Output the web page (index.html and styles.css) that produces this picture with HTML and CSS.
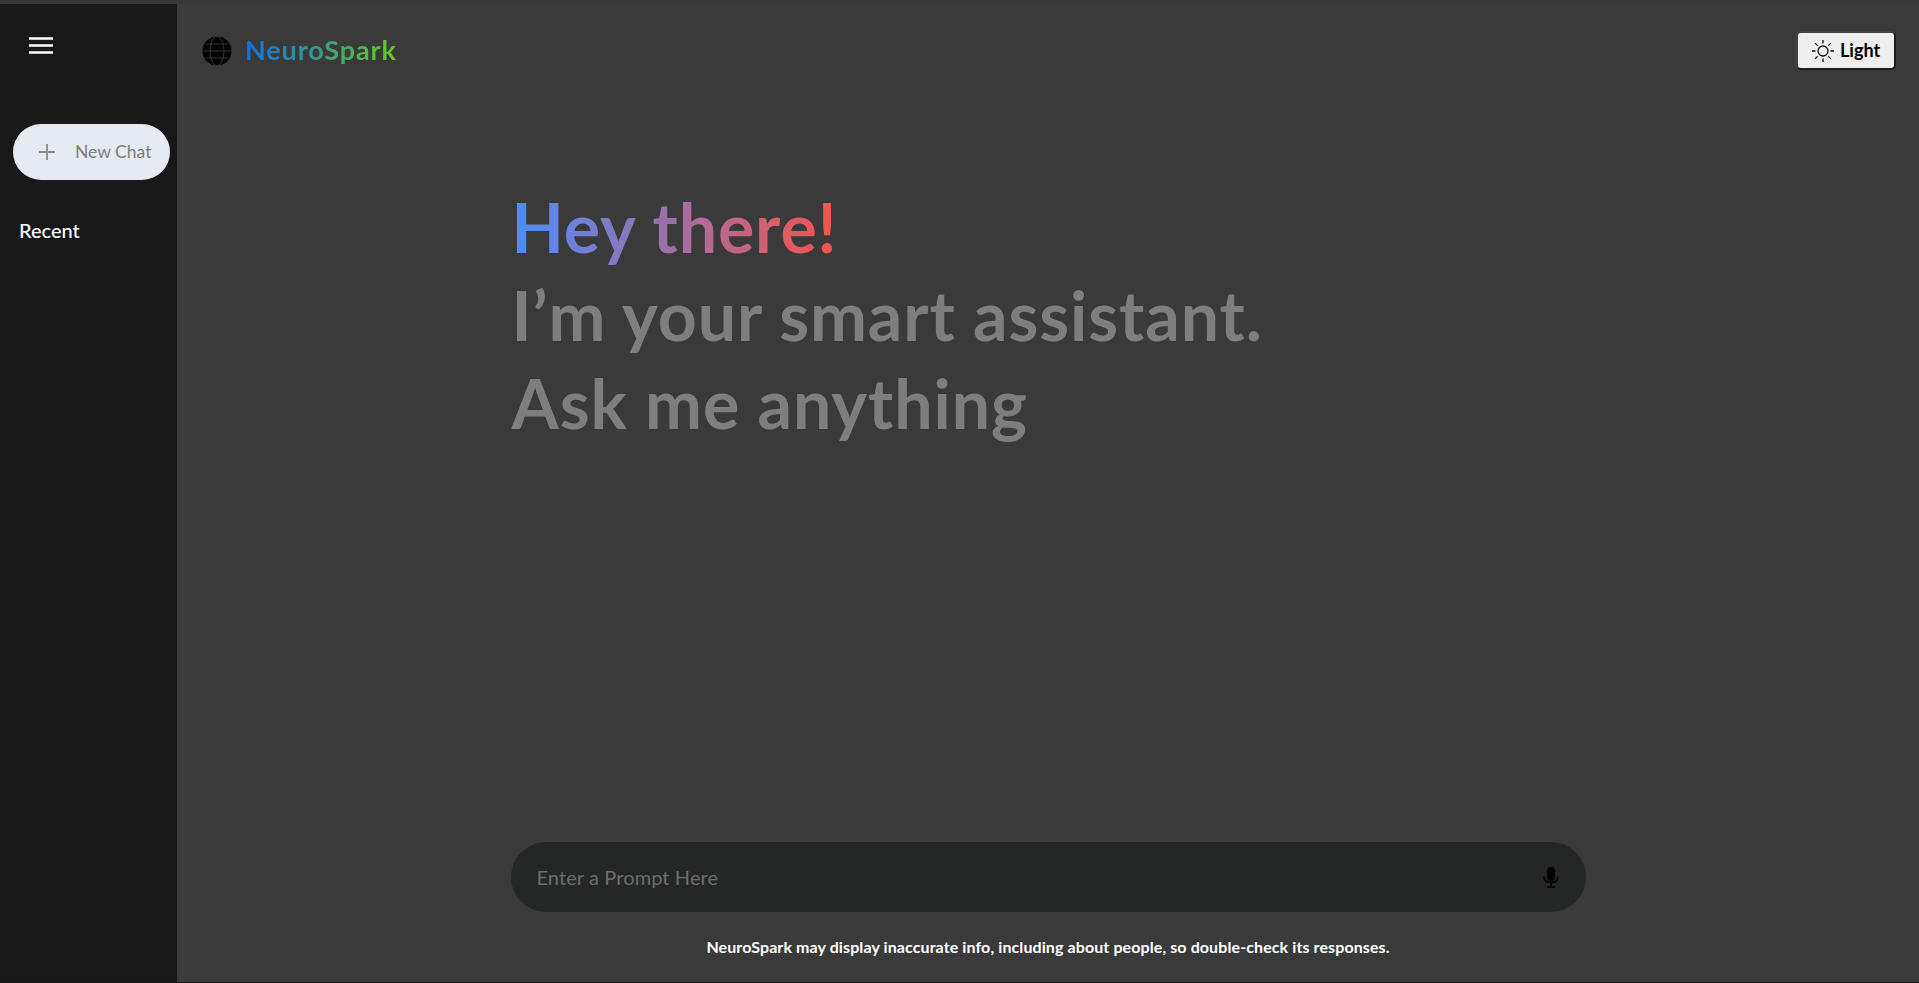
FILE: index.html
```html
<!DOCTYPE html>
<html lang="en">
<head>
    <meta charset="UTF-8">
    <meta name="viewport" content="width=device-width, initial-scale=1.0">
    <title>NeuroSpark</title>
    <link rel="stylesheet" href="styles.css">
</head>
<body>
    <div class="app">
        <!-- Sidebar -->
        <aside class="sidebar">
            <button class="menu-btn" aria-label="Menu">
                <svg width="24" height="17" viewBox="0 0 24 17"><path d="M0 1.5h24M0 8.5h24M0 15.5h24" stroke="#fff" stroke-width="2.4"/></svg>
            </button>
            <button class="new-chat">
                <svg width="16" height="16" viewBox="0 0 16 16"><path d="M8 0v16M0 8h16" stroke="#8a8a8a" stroke-width="1.8"/></svg>
                <span>New Chat</span>
            </button>
            <p class="recent">Recent</p>
        </aside>

        <main class="main">
            <header class="topbar">
                <div class="brand">
                    <svg class="globe" width="30" height="30" viewBox="0 0 30 30">
                        <circle cx="15" cy="15" r="14.5" fill="#000"/>
                        <path d="M.5 15h29M3.5 8h23M3.5 22h23" stroke="#333" stroke-width="1.2" fill="none"/>
                        <ellipse cx="15" cy="15" rx="7" ry="14.5" stroke="#333" stroke-width="1.2" fill="none"/>
                    </svg>
                    <span class="brand-name">NeuroSpark</span>
                </div>
                <button class="theme-btn">
                    <svg width="22" height="22" viewBox="0 0 22 22" fill="none" stroke="#111" stroke-width="1.3">
                        <circle cx="11" cy="11" r="5"/>
                        <path d="M11 0v3.5M11 18.5V22M0 11h3.5M18.5 11H22M3.2 3.2l2.4 2.4M16.4 16.4l2.4 2.4M3.2 18.8l2.4-2.4M16.4 5.6l2.4-2.4"/>
                    </svg>
                    <span class="theme-label">Light</span>
                </button>
            </header>

            <section class="greeting">
                <h1 class="hello"><span>Hey there!</span></h1>
                <p>I’m your smart assistant.</p>
                <p>Ask me anything</p>
            </section>

            <section class="bottom">
                <div class="prompt">
                    <input type="text" placeholder="Enter a Prompt Here">
                    <svg width="16" height="21" viewBox="0 0 16 21">
                        <rect x="4" y="0" width="8" height="14" rx="4" fill="#000"/>
                        <path d="M1 9.5c0 4 3 6 7 6s7-2 7-6M8 15.5V20M4 20h8" stroke="#000" stroke-width="1.6" fill="none"/>
                    </svg>
                </div>
                <p class="notice">NeuroSpark may display inaccurate info, including about people, so double-check its responses.</p>
            </section>
        </main>
    </div>
</body>
</html>
```

FILE: styles.css
```css
* {
    box-sizing: border-box;
}

html, body {
    height: 100%;
}

body {
    margin: 0;
    font-family: Lato, "Open Sans", sans-serif;
    background-color: #3a3a3a;
    border-top: 4px solid #35353b;
    border-bottom: 1px solid #1a1a1a;
    overflow: hidden;
}

button {
    font-family: inherit;
    border: none;
    cursor: pointer;
}

.app {
    display: flex;
    height: 100%;
}

/* Sidebar */
.sidebar {
    width: 177px;
    flex-shrink: 0;
    background-color: #181818;
    padding: 33px 0 0 13px;
}

.menu-btn {
    display: block;
    padding: 0;
    margin-left: 16px;
    background: none;
    line-height: 0;
}

.new-chat {
    display: flex;
    align-items: center;
    gap: 20px;
    width: 157px;
    height: 56px;
    margin-top: 70px;
    padding-left: 26px;
    border-radius: 28px;
    background-color: #e6eaf1;
    color: #7f7f7f;
    font-size: 17.5px;
    white-space: nowrap;
}

.new-chat span {
    padding-bottom: 1px;
}

.recent {
    margin: 37px 0 0 6px;
    font-size: 20px;
    line-height: 26px;
    font-weight: 500;
    color: #fff;
}

/* Main area */
.main {
    flex: 1;
    display: flex;
    flex-direction: column;
    min-width: 0;
}

.topbar {
    display: flex;
    justify-content: space-between;
    align-items: center;
    padding: 27px 23px 0 25px;
}

.brand {
    display: flex;
    align-items: center;
    gap: 13px;
}

.brand-name {
    padding-bottom: 2px;
    font-size: 27px;
    font-weight: 700;
    letter-spacing: 0.9px;
    background: linear-gradient(90deg, #0f6fe6, #65cb1e);
    -webkit-background-clip: text;
    background-clip: text;
    color: transparent;
}

.theme-btn {
    display: flex;
    align-items: center;
    gap: 6px;
    width: 100px;
    height: 39px;
    padding-left: 14px;
    border: 2px solid #1c1c1c;
    border-top-color: #444;
    border-left-color: #444;
    border-radius: 5px;
    background-color: #efefef;
    color: #000;
    font-size: 18px;
    font-weight: 700;
}

.theme-label {
    padding-bottom: 2px;
}

.greeting {
    width: 1075px;
    margin: 113px auto 0;
    padding-left: 1px;
    font-size: 68px;
    line-height: 88px;
    font-weight: 700;
    letter-spacing: 0.9px;
    color: #7e7e7e;
}

.greeting p,
.hello {
    margin: 0;
    font-size: inherit;
    line-height: inherit;
    font-weight: inherit;
    white-space: nowrap;
}

.hello span {
    background: linear-gradient(90deg, #4b8dfb, #f9524c);
    -webkit-background-clip: text;
    background-clip: text;
    color: transparent;
}

.bottom {
    margin-top: auto;
    padding-bottom: 25px;
    display: flex;
    flex-direction: column;
    align-items: center;
}

.prompt {
    display: flex;
    align-items: center;
    width: 1075px;
    height: 70px;
    padding: 0 27px 0 24px;
    border-radius: 35px;
    background-color: #242726;
}

.prompt input {
    flex: 1;
    border: none;
    outline: none;
    background: none;
    font-family: inherit;
    font-size: 20px;
    letter-spacing: 0.1px;
    color: #fff;
}

.prompt input::placeholder {
    color: #6b6e6e;
}

.notice {
    margin: 25px 0 0;
    font-size: 16px;
    line-height: 20px;
    font-weight: 700;
    letter-spacing: 0.1px;
    color: #fff;
}
```
